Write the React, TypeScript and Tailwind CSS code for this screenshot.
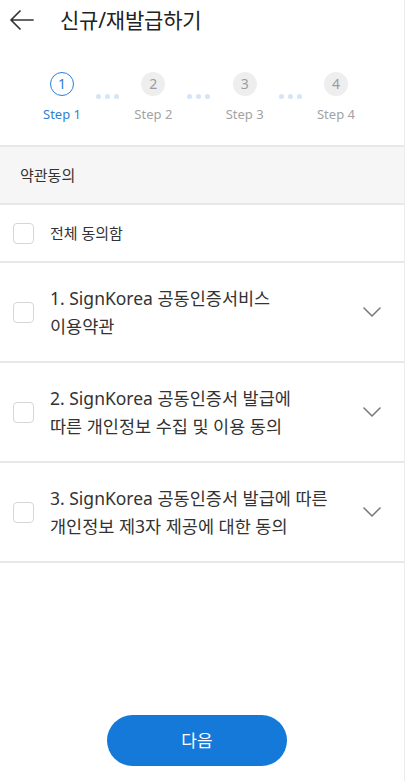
import React from 'react';

const font = "font-['Noto_Sans','Noto_Sans_CJK_KR',sans-serif]";

interface IStepProps {
  num: number;
  active?: boolean;
}

function Step(props: IStepProps) {
  return (
    <div className="w-[50px] flex flex-col items-center">
      {props.active ? (
        <div className="w-[24px] h-[24px] rounded-full border-[1.5px] border-[#2b7fd6] flex items-center justify-center text-[14px] leading-none text-[#2b7fd6]">
          {props.num}
        </div>
      ) : (
        <div className="w-[24px] h-[24px] rounded-full bg-[#eeeeee] flex items-center justify-center text-[14px] leading-none text-[#9c9c9c]">
          {props.num}
        </div>
      )}
      <div
        className={
          'mt-[9px] text-[13px] leading-[18px] whitespace-nowrap ' +
          (props.active ? 'text-[#2d7fd3]' : 'text-[#a3a3a3]')
        }
      >
        Step {props.num}
      </div>
    </div>
  );
}

function Dots() {
  return (
    <div className="flex-1 flex justify-center gap-[4px] pt-[22px]">
      <span className="w-[5px] h-[5px] rounded-full bg-[#d3e5f7]" />
      <span className="w-[5px] h-[5px] rounded-full bg-[#d3e5f7]" />
      <span className="w-[5px] h-[5px] rounded-full bg-[#d3e5f7]" />
    </div>
  );
}

function Checkbox() {
  return <div className="w-[21px] h-[21px] rounded-[4px] border-[1.5px] border-[#d6d6d6] bg-white shrink-0" />;
}

function Chevron() {
  return (
    <svg width="18" height="10" viewBox="0 0 18 10" fill="none" className="shrink-0">
      <path d="M1 1l8 8 8-8" stroke="#7a7a7a" strokeWidth="1.6" strokeLinecap="round" strokeLinejoin="round" />
    </svg>
  );
}

interface ITermRowProps {
  line1: string;
  line2: string;
}

function TermRow(props: ITermRowProps) {
  return (
    <div className="h-[100px] border-b-2 border-[#e8e8e8] flex items-center pl-[13px] pr-[23px]">
      <Checkbox />
      <div className="ml-[16px] flex-1 text-[17.5px] leading-[28px] text-[#333333] whitespace-nowrap">
        {props.line1}
        <br />
        {props.line2}
      </div>
      <Chevron />
    </div>
  );
}

export default function App() {
  return (
    <div className={'w-[406px] h-[781px] bg-white flex ' + font}>
      <div className="w-[405px] h-full border-r border-[#ececec] flex flex-col">
        <div className="h-[40px] flex items-center pl-[9px]">
          <svg width="25" height="24" viewBox="0 0 25 24" fill="none">
            <path d="M24 12H2 M11 3l-9 9 9 9" stroke="#333333" strokeWidth="1.7" strokeLinecap="round" strokeLinejoin="round" />
          </svg>
          <div className="ml-[26px] text-[21px] leading-none text-[#222222] tracking-[-0.2px]">신규/재발급하기</div>
        </div>

        <div className="pt-[32px] pb-[22px] border-b-2 border-[#e8e8e8]">
          <div className="ml-[37px] w-[324px] flex items-start">
            <Step num={1} active />
            <Dots />
            <Step num={2} />
            <Dots />
            <Step num={3} />
            <Dots />
            <Step num={4} />
          </div>
        </div>

        <div className="h-[58px] bg-[#f6f6f6] flex items-center pl-[20px] text-[15px] text-[#333333] border-b-2 border-[#e8e8e8]">
          약관동의
        </div>

        <div className="h-[58px] border-b-2 border-[#e8e8e8] flex items-center pl-[13px]">
          <Checkbox />
          <div className="ml-[16px] text-[15px] text-[#333333]">전체 동의함</div>
        </div>

        <TermRow line1="1. SignKorea 공동인증서비스" line2="이용약관" />
        <TermRow line1="2. SignKorea 공동인증서 발급에" line2="따른 개인정보 수집 및 이용 동의" />
        <TermRow line1="3. SignKorea 공동인증서 발급에 따른" line2="개인정보 제3자 제공에 대한 동의" />

        <div className="flex-1" />
        <div className="pb-[15px] pl-[107px]">
          <button className="w-[180px] h-[51px] rounded-full bg-[#1479d9] text-white text-[17px] flex items-center justify-center">
            다음
          </button>
        </div>
      </div>
    </div>
  );
}
